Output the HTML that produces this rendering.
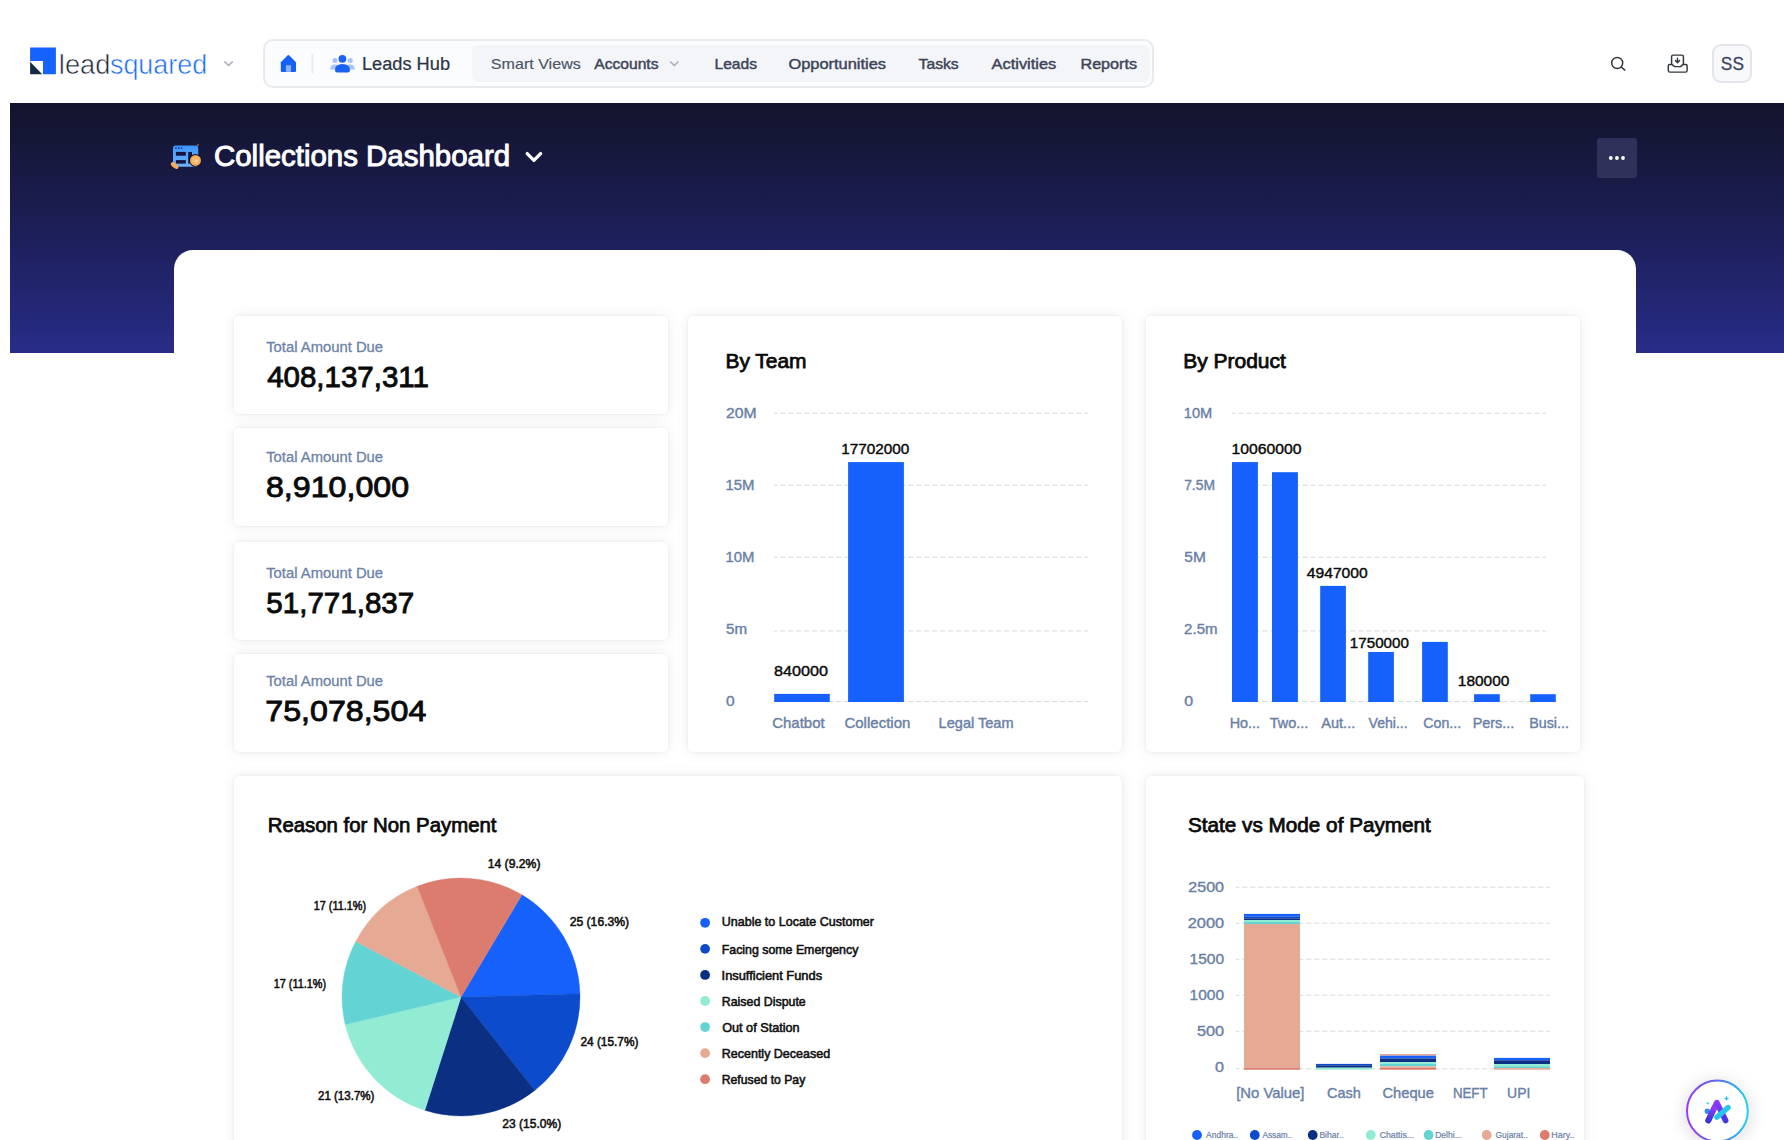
<!DOCTYPE html>
<html lang="en"><head><meta charset="utf-8"><title>Collections Dashboard</title>
<style>
html,body{margin:0;padding:0;background:#fff;}
body{width:1784px;height:1140px;position:relative;overflow:hidden;font-family:"Liberation Sans", sans-serif;}
body>div{position:absolute;box-sizing:border-box;}
svg.ov{position:absolute;left:0;top:0;font-family:"Liberation Sans", sans-serif;}
</style></head><body>
<div style="left:263px;top:38.6px;width:891px;height:49.5px;background:#fbfcfd;border:2px solid #e8eaee;border-radius:10px;"></div>
<div style="left:472px;top:44.5px;width:678px;height:37.5px;background:#f3f5f8;border-radius:7px;"></div>
<div style="left:1712.4px;top:43.8px;width:39.6px;height:39.7px;background:#f8f9fb;border:2px solid #e3e5ea;border-radius:9px;"></div>
<div style="left:10px;top:103px;width:1774px;height:249.6px;background:linear-gradient(180deg,#13142b 0%,#1b1d52 45%,#282c87 100%);"></div>
<div style="left:174px;top:250px;width:1462px;height:910px;background:#fff;border-radius:19px 19px 0 0;"></div>
<div style="left:1597px;top:138px;width:40px;height:40px;background:#30315b;border-radius:3px;"></div>
<div style="left:234px;top:316px;width:434px;height:98px;background:#fff;border-radius:5px;box-shadow:0 0 14px rgba(0,0,0,0.08),0 0 3px rgba(0,0,0,0.04),0 0 0 1px rgba(0,0,0,0.012);"></div>
<div style="left:234px;top:428px;width:434px;height:98px;background:#fff;border-radius:5px;box-shadow:0 0 14px rgba(0,0,0,0.08),0 0 3px rgba(0,0,0,0.04),0 0 0 1px rgba(0,0,0,0.012);"></div>
<div style="left:234px;top:541.5px;width:434px;height:98px;background:#fff;border-radius:5px;box-shadow:0 0 14px rgba(0,0,0,0.08),0 0 3px rgba(0,0,0,0.04),0 0 0 1px rgba(0,0,0,0.012);"></div>
<div style="left:234px;top:654px;width:434px;height:98px;background:#fff;border-radius:5px;box-shadow:0 0 14px rgba(0,0,0,0.08),0 0 3px rgba(0,0,0,0.04),0 0 0 1px rgba(0,0,0,0.012);"></div>
<div style="left:688px;top:316px;width:434px;height:435.5px;background:#fff;border-radius:5px;box-shadow:0 0 14px rgba(0,0,0,0.08),0 0 3px rgba(0,0,0,0.04),0 0 0 1px rgba(0,0,0,0.012);"></div>
<div style="left:1146px;top:316px;width:434px;height:435.5px;background:#fff;border-radius:5px;box-shadow:0 0 14px rgba(0,0,0,0.08),0 0 3px rgba(0,0,0,0.04),0 0 0 1px rgba(0,0,0,0.012);"></div>
<div style="left:234px;top:776px;width:888px;height:384px;background:#fff;border-radius:5px;box-shadow:0 0 14px rgba(0,0,0,0.08),0 0 3px rgba(0,0,0,0.04),0 0 0 1px rgba(0,0,0,0.012);"></div>
<div style="left:1146px;top:776px;width:438px;height:384px;background:#fff;border-radius:5px;box-shadow:0 0 14px rgba(0,0,0,0.08),0 0 3px rgba(0,0,0,0.04),0 0 0 1px rgba(0,0,0,0.012);"></div>
<svg class="ov" width="1784" height="1140" viewBox="0 0 1784 1140">
<path d="M30.1 47.4H55.9V74.2H43V60.9H30.1Z" fill="#1562fc"/>
<path d="M30.1 61.7L42.2 74.2H30.1Z" fill="#142b45"/>
<text x="58.86" y="74.10" font-size="27" font-weight="normal" fill="#1f2a37" textLength="51.49" lengthAdjust="spacingAndGlyphs" style="paint-order:fill stroke" stroke="#fff" stroke-width="0.55">lead</text>
<text x="109.95" y="74.10" font-size="27" font-weight="normal" fill="#1a6cf0" textLength="97.28" lengthAdjust="spacingAndGlyphs" style="paint-order:fill stroke" stroke="#fff" stroke-width="0.55">squared</text>
<path d="M224.9 61.9L228.6 65.5L232.3 61.9" fill="none" stroke="#adb4c1" stroke-width="1.7" stroke-linecap="round" stroke-linejoin="round"/>
<path d="M280.8 62.2L287.5 55.5Q288.4 54.7 289.3 55.5L296 62.2V70.9Q296 71.9 295 71.9H281.8Q280.8 71.9 280.8 70.9Z" fill="#1660fa"/>
<rect x="285.9" y="65.2" width="5.1" height="6.7" fill="#8fb0fa"/>
<rect x="311.40" y="53.90" width="2.00" height="19.50" fill="#e9ebee"/>
<g fill="#a9c3f9"><circle cx="334.9" cy="60.4" r="2.5"/><circle cx="350.2" cy="60.4" r="2.5"/><path d="M330.2 69.5Q330.2 64.4 335 64.4Q339.5 64.4 339.5 69.5Z"/><path d="M345.5 69.5Q345.5 64.4 350 64.4Q354.8 64.4 354.8 69.5Z"/></g>
<g fill="#1a62f4"><circle cx="342.4" cy="58.8" r="3.9"/><path d="M335 70.4Q335 64.1 342.4 64.1Q349.9 64.1 349.9 70.4Q349.9 72.4 347.9 72.4H337Q335 72.4 335 70.4Z"/></g>
<text x="361.90" y="69.80" font-size="18" font-weight="normal" fill="#2b3245" textLength="88.16" lengthAdjust="spacingAndGlyphs" stroke="#2b3245" stroke-width="0.2">Leads Hub</text>
<text x="490.86" y="68.90" font-size="15" font-weight="normal" fill="#4d5567" textLength="89.93" lengthAdjust="spacingAndGlyphs" stroke="#4d5567" stroke-width="0.18">Smart Views</text>
<text x="594.29" y="68.90" font-size="15" font-weight="normal" fill="#3d4558" textLength="64.24" lengthAdjust="spacingAndGlyphs" stroke="#3d4558" stroke-width="0.45">Accounts</text>
<path d="M670.6 61.9L674.3 65.6L678 61.9" fill="none" stroke="#b2b9c6" stroke-width="1.9" stroke-linecap="round" stroke-linejoin="round"/>
<text x="714.44" y="68.90" font-size="15" font-weight="normal" fill="#3d4558" textLength="42.60" lengthAdjust="spacingAndGlyphs" stroke="#3d4558" stroke-width="0.45">Leads</text>
<text x="788.45" y="68.90" font-size="15" font-weight="normal" fill="#3d4558" textLength="97.62" lengthAdjust="spacingAndGlyphs" stroke="#3d4558" stroke-width="0.45">Opportunities</text>
<text x="918.59" y="68.90" font-size="15" font-weight="normal" fill="#3d4558" textLength="40.13" lengthAdjust="spacingAndGlyphs" stroke="#3d4558" stroke-width="0.45">Tasks</text>
<text x="991.59" y="68.90" font-size="15" font-weight="normal" fill="#3d4558" textLength="64.67" lengthAdjust="spacingAndGlyphs" stroke="#3d4558" stroke-width="0.45">Activities</text>
<text x="1080.50" y="68.90" font-size="15" font-weight="normal" fill="#3d4558" textLength="56.46" lengthAdjust="spacingAndGlyphs" stroke="#3d4558" stroke-width="0.45">Reports</text>
<g fill="none" stroke="#2f333a" stroke-width="1.45" stroke-linecap="round"><circle cx="1617.2" cy="63" r="5.5"/><path d="M1621.6 67.3L1624.8 70.1"/></g>
<g fill="none" stroke="#32363d" stroke-width="1.45" stroke-linecap="round" stroke-linejoin="round"><path d="M1671.6 63.8V56.5Q1671.6 55.1 1673 55.1H1682Q1683.4 55.1 1683.4 56.5V63.8"/><path d="M1669.7 64.4H1671.8L1674.7 66.6H1680.4L1683.2 64.4H1685.7Q1687.1 64.4 1687.1 65.8V70.5Q1687.1 72.1 1685.5 72.1H1669.9Q1668.3 72.1 1668.3 70.5V65.8Q1668.3 64.4 1669.7 64.4Z"/><path d="M1677.5 58.3V62.4M1675.4 60.6L1677.5 62.7L1679.6 60.6"/></g>
<text x="1720.86" y="69.70" font-size="17.5" font-weight="normal" fill="#3a4460" textLength="23.08" lengthAdjust="spacingAndGlyphs" stroke="#3a4460" stroke-width="0.3">SS</text>
<text x="213.98" y="165.90" font-size="28.6" font-weight="normal" fill="#fff" textLength="296.14" lengthAdjust="spacingAndGlyphs" stroke="#fff" stroke-width="0.95">Collections Dashboard</text>
<path d="M527.2 153.6L533.9 160.4L540.6 153.6" fill="none" stroke="#fff" stroke-width="3.3" stroke-linecap="round" stroke-linejoin="round"/>
<defs><linearGradient id="wg" x1="0" y1="0" x2="0" y2="1"><stop offset="0" stop-color="#3a93fb"/><stop offset="0.28" stop-color="#4fa0fc"/><stop offset="1" stop-color="#6ab3fe"/></linearGradient><radialGradient id="cg" cx="0.55" cy="0.55" r="0.6"><stop offset="0" stop-color="#fde3b5"/><stop offset="0.35" stop-color="#f7b463"/><stop offset="1" stop-color="#f49b43"/></radialGradient></defs>
<g><rect x="173" y="145.4" width="25.2" height="21.3" rx="2.4" fill="url(#wg)"/><g fill="#123a9c"><circle cx="175.9" cy="148.1" r="0.95"/><circle cx="178.7" cy="148.1" r="0.95"/><circle cx="181.6" cy="148.1" r="0.95"/></g><g fill="#15153f"><rect x="175.9" y="151.9" width="9.9" height="3.8"/><rect x="175.9" y="160.1" width="9.9" height="3.5"/><rect x="188.2" y="151.9" width="3.8" height="11.7"/></g><circle cx="195.5" cy="160.4" r="6.4" fill="#0f1030"/><circle cx="195.5" cy="160.4" r="5.5" fill="url(#cg)"/><circle cx="195.5" cy="160.4" r="3" fill="none" stroke="#f8c889" stroke-width="0.8"/><ellipse cx="174.6" cy="165.6" rx="4.4" ry="2.3" transform="rotate(40 174.6 165.6)" fill="#f6ab57"/><path d="M196.8 145.2L198.6 143.6L198.4 145.8Z" fill="#d99a6a"/></g>
<g fill="#fff"><circle cx="1610.8" cy="158" r="1.9"/><circle cx="1616.9" cy="158" r="1.9"/><circle cx="1623" cy="158" r="1.9"/></g>
<text x="266.22" y="352.10" font-size="14" font-weight="normal" fill="#6d83a8" textLength="116.87" lengthAdjust="spacingAndGlyphs" stroke="#6d83a8" stroke-width="0.3">Total Amount Due</text>
<text x="267.18" y="387.00" font-size="30" font-weight="normal" fill="#0a0a0a" textLength="161.69" lengthAdjust="spacingAndGlyphs" stroke="#0a0a0a" stroke-width="0.9">408,137,311</text>
<text x="266.22" y="462.10" font-size="14" font-weight="normal" fill="#6d83a8" textLength="116.87" lengthAdjust="spacingAndGlyphs" stroke="#6d83a8" stroke-width="0.3">Total Amount Due</text>
<text x="265.95" y="497.00" font-size="30" font-weight="normal" fill="#0a0a0a" textLength="143.16" lengthAdjust="spacingAndGlyphs" stroke="#0a0a0a" stroke-width="0.9">8,910,000</text>
<text x="266.22" y="578.10" font-size="14" font-weight="normal" fill="#6d83a8" textLength="116.87" lengthAdjust="spacingAndGlyphs" stroke="#6d83a8" stroke-width="0.3">Total Amount Due</text>
<text x="266.37" y="613.00" font-size="30" font-weight="normal" fill="#0a0a0a" textLength="147.87" lengthAdjust="spacingAndGlyphs" stroke="#0a0a0a" stroke-width="0.9">51,771,837</text>
<text x="266.22" y="686.10" font-size="14" font-weight="normal" fill="#6d83a8" textLength="116.87" lengthAdjust="spacingAndGlyphs" stroke="#6d83a8" stroke-width="0.3">Total Amount Due</text>
<text x="265.30" y="721.00" font-size="30" font-weight="normal" fill="#0a0a0a" textLength="160.99" lengthAdjust="spacingAndGlyphs" stroke="#0a0a0a" stroke-width="0.9">75,078,504</text>
<text x="725.41" y="368.10" font-size="20" font-weight="normal" fill="#0a0a0a" textLength="81.15" lengthAdjust="spacingAndGlyphs" stroke="#0a0a0a" stroke-width="0.75">By Team</text>
<line x1="774" x2="1088" y1="413.2" y2="413.2" stroke="#d9d9d9" stroke-width="1.05" stroke-dasharray="5 3" stroke-dashoffset="1.7"/>
<line x1="774" x2="1088" y1="485.2" y2="485.2" stroke="#d9d9d9" stroke-width="1.05" stroke-dasharray="5 3" stroke-dashoffset="1.7"/>
<line x1="774" x2="1088" y1="557.2" y2="557.2" stroke="#d9d9d9" stroke-width="1.05" stroke-dasharray="5 3" stroke-dashoffset="1.7"/>
<line x1="774" x2="1088" y1="631" y2="631" stroke="#d9d9d9" stroke-width="1.05" stroke-dasharray="5 3" stroke-dashoffset="1.7"/>
<line x1="774" x2="1088" y1="701.5" y2="701.5" stroke="#d9d9d9" stroke-width="1.05" stroke-dasharray="5 3" stroke-dashoffset="1.7"/>
<text x="725.90" y="417.80" font-size="13.9" font-weight="normal" fill="#6a80a6" textLength="30.71" lengthAdjust="spacingAndGlyphs" stroke="#6a80a6" stroke-width="0.38">20M</text>
<text x="725.56" y="489.85" font-size="13.9" font-weight="normal" fill="#6a80a6" textLength="28.98" lengthAdjust="spacingAndGlyphs" stroke="#6a80a6" stroke-width="0.38">15M</text>
<text x="725.56" y="561.90" font-size="13.9" font-weight="normal" fill="#6a80a6" textLength="28.87" lengthAdjust="spacingAndGlyphs" stroke="#6a80a6" stroke-width="0.38">10M</text>
<text x="726.08" y="633.80" font-size="13.9" font-weight="normal" fill="#6a80a6" textLength="21.02" lengthAdjust="spacingAndGlyphs" stroke="#6a80a6" stroke-width="0.38">5m</text>
<text x="726.08" y="705.60" font-size="13.9" font-weight="normal" fill="#6a80a6" textLength="8.63" lengthAdjust="spacingAndGlyphs" stroke="#6a80a6" stroke-width="0.38">0</text>
<rect x="774.20" y="693.90" width="55.60" height="8.10" fill="#1660fb"/>
<rect x="848.10" y="462.10" width="55.80" height="239.90" fill="#1660fb"/>
<text x="774.10" y="676.30" font-size="14.3" font-weight="normal" fill="#0a0a0a" textLength="53.93" lengthAdjust="spacingAndGlyphs" stroke="#0a0a0a" stroke-width="0.4">840000</text>
<text x="841.23" y="453.90" font-size="14.3" font-weight="normal" fill="#0a0a0a" textLength="68.17" lengthAdjust="spacingAndGlyphs" stroke="#0a0a0a" stroke-width="0.4">17702000</text>
<text x="772.23" y="727.60" font-size="13.9" font-weight="normal" fill="#6a80a6" textLength="52.49" lengthAdjust="spacingAndGlyphs" stroke="#6a80a6" stroke-width="0.38">Chatbot</text>
<text x="844.43" y="727.60" font-size="13.9" font-weight="normal" fill="#6a80a6" textLength="65.96" lengthAdjust="spacingAndGlyphs" stroke="#6a80a6" stroke-width="0.38">Collection</text>
<text x="938.63" y="727.60" font-size="13.9" font-weight="normal" fill="#6a80a6" textLength="74.92" lengthAdjust="spacingAndGlyphs" stroke="#6a80a6" stroke-width="0.38">Legal Team</text>
<text x="1183.26" y="368.10" font-size="20" font-weight="normal" fill="#0a0a0a" textLength="102.52" lengthAdjust="spacingAndGlyphs" stroke="#0a0a0a" stroke-width="0.75">By Product</text>
<line x1="1232" x2="1546" y1="413.2" y2="413.2" stroke="#d9d9d9" stroke-width="1.05" stroke-dasharray="5 3" stroke-dashoffset="1.7"/>
<line x1="1232" x2="1546" y1="485.2" y2="485.2" stroke="#d9d9d9" stroke-width="1.05" stroke-dasharray="5 3" stroke-dashoffset="1.7"/>
<line x1="1232" x2="1546" y1="557.2" y2="557.2" stroke="#d9d9d9" stroke-width="1.05" stroke-dasharray="5 3" stroke-dashoffset="1.7"/>
<line x1="1232" x2="1546" y1="631" y2="631" stroke="#d9d9d9" stroke-width="1.05" stroke-dasharray="5 3" stroke-dashoffset="1.7"/>
<line x1="1232" x2="1546" y1="701.5" y2="701.5" stroke="#d9d9d9" stroke-width="1.05" stroke-dasharray="5 3" stroke-dashoffset="1.7"/>
<text x="1183.78" y="417.80" font-size="13.9" font-weight="normal" fill="#6a80a6" textLength="28.43" lengthAdjust="spacingAndGlyphs" stroke="#6a80a6" stroke-width="0.38">10M</text>
<text x="1184.18" y="489.85" font-size="13.9" font-weight="normal" fill="#6a80a6" textLength="30.76" lengthAdjust="spacingAndGlyphs" stroke="#6a80a6" stroke-width="0.38">7.5M</text>
<text x="1184.27" y="561.90" font-size="13.9" font-weight="normal" fill="#6a80a6" textLength="21.51" lengthAdjust="spacingAndGlyphs" stroke="#6a80a6" stroke-width="0.38">5M</text>
<text x="1184.14" y="633.80" font-size="13.9" font-weight="normal" fill="#6a80a6" textLength="33.36" lengthAdjust="spacingAndGlyphs" stroke="#6a80a6" stroke-width="0.38">2.5m</text>
<text x="1184.27" y="705.60" font-size="13.9" font-weight="normal" fill="#6a80a6" textLength="8.87" lengthAdjust="spacingAndGlyphs" stroke="#6a80a6" stroke-width="0.38">0</text>
<rect x="1232.00" y="462.10" width="25.90" height="239.90" fill="#1660fb"/>
<rect x="1272.00" y="472.20" width="25.90" height="229.80" fill="#1660fb"/>
<rect x="1320.20" y="585.90" width="25.70" height="116.10" fill="#1660fb"/>
<rect x="1368.20" y="652.00" width="25.70" height="50.00" fill="#1660fb"/>
<rect x="1422.10" y="641.90" width="25.70" height="60.10" fill="#1660fb"/>
<rect x="1474.10" y="694.20" width="25.70" height="7.80" fill="#1660fb"/>
<rect x="1530.20" y="694.20" width="25.60" height="7.80" fill="#1660fb"/>
<text x="1231.60" y="453.90" font-size="14.3" font-weight="normal" fill="#0a0a0a" textLength="69.91" lengthAdjust="spacingAndGlyphs" stroke="#0a0a0a" stroke-width="0.4">10060000</text>
<text x="1306.84" y="577.70" font-size="14.3" font-weight="normal" fill="#0a0a0a" textLength="60.87" lengthAdjust="spacingAndGlyphs" stroke="#0a0a0a" stroke-width="0.4">4947000</text>
<text x="1349.84" y="647.80" font-size="14.3" font-weight="normal" fill="#0a0a0a" textLength="59.05" lengthAdjust="spacingAndGlyphs" stroke="#0a0a0a" stroke-width="0.4">1750000</text>
<text x="1457.82" y="686.00" font-size="14.3" font-weight="normal" fill="#0a0a0a" textLength="51.58" lengthAdjust="spacingAndGlyphs" stroke="#0a0a0a" stroke-width="0.4">180000</text>
<text x="1229.71" y="727.90" font-size="13.9" font-weight="normal" fill="#6a80a6" textLength="30.42" lengthAdjust="spacingAndGlyphs" stroke="#6a80a6" stroke-width="0.38">Ho...</text>
<text x="1269.87" y="727.90" font-size="13.9" font-weight="normal" fill="#6a80a6" textLength="38.43" lengthAdjust="spacingAndGlyphs" stroke="#6a80a6" stroke-width="0.38">Two...</text>
<text x="1321.26" y="727.90" font-size="13.9" font-weight="normal" fill="#6a80a6" textLength="33.98" lengthAdjust="spacingAndGlyphs" stroke="#6a80a6" stroke-width="0.38">Aut...</text>
<text x="1368.53" y="727.90" font-size="13.9" font-weight="normal" fill="#6a80a6" textLength="39.14" lengthAdjust="spacingAndGlyphs" stroke="#6a80a6" stroke-width="0.38">Vehi...</text>
<text x="1423.27" y="727.90" font-size="13.9" font-weight="normal" fill="#6a80a6" textLength="37.84" lengthAdjust="spacingAndGlyphs" stroke="#6a80a6" stroke-width="0.38">Con...</text>
<text x="1472.71" y="727.90" font-size="13.9" font-weight="normal" fill="#6a80a6" textLength="41.62" lengthAdjust="spacingAndGlyphs" stroke="#6a80a6" stroke-width="0.38">Pers...</text>
<text x="1529.22" y="727.90" font-size="13.9" font-weight="normal" fill="#6a80a6" textLength="39.70" lengthAdjust="spacingAndGlyphs" stroke="#6a80a6" stroke-width="0.38">Busi...</text>
<text x="267.70" y="831.70" font-size="20" font-weight="normal" fill="#0a0a0a" textLength="228.77" lengthAdjust="spacingAndGlyphs" stroke="#0a0a0a" stroke-width="0.75">Reason for Non Payment</text>
<path d="M461 997L521.93 894.78A119 119 0 0 1 579.95 993.68Z" fill="#1660fb" stroke="#1660fb" stroke-width="0.4"/>
<path d="M461 997L579.95 993.68A119 119 0 0 1 534.75 1090.39Z" fill="#0c4ccc" stroke="#0c4ccc" stroke-width="0.4"/>
<path d="M461 997L534.75 1090.39A119 119 0 0 1 424.82 1110.37Z" fill="#0b2f83" stroke="#0b2f83" stroke-width="0.4"/>
<path d="M461 997L424.82 1110.37A119 119 0 0 1 345.24 1024.58Z" fill="#92ecd3" stroke="#92ecd3" stroke-width="0.4"/>
<path d="M461 997L345.24 1024.58A119 119 0 0 1 355.73 941.50Z" fill="#63d3d3" stroke="#63d3d3" stroke-width="0.4"/>
<path d="M461 997L355.73 941.50A119 119 0 0 1 417.19 886.36Z" fill="#e6aa94" stroke="#e6aa94" stroke-width="0.4"/>
<path d="M461 997L417.19 886.36A119 119 0 0 1 521.93 894.78Z" fill="#dc7c6e" stroke="#dc7c6e" stroke-width="0.4"/>
<text x="487.65" y="867.70" font-size="12.3" font-weight="normal" fill="#111" textLength="52.83" lengthAdjust="spacingAndGlyphs" stroke="#111" stroke-width="0.55">14 (9.2%)</text>
<text x="569.66" y="925.70" font-size="12.3" font-weight="normal" fill="#111" textLength="59.52" lengthAdjust="spacingAndGlyphs" stroke="#111" stroke-width="0.55">25 (16.3%)</text>
<text x="580.38" y="1045.70" font-size="12.3" font-weight="normal" fill="#111" textLength="58.08" lengthAdjust="spacingAndGlyphs" stroke="#111" stroke-width="0.55">24 (15.7%)</text>
<text x="502.37" y="1128.20" font-size="12.3" font-weight="normal" fill="#111" textLength="58.80" lengthAdjust="spacingAndGlyphs" stroke="#111" stroke-width="0.55">23 (15.0%)</text>
<text x="317.99" y="1100.20" font-size="12.3" font-weight="normal" fill="#111" textLength="56.45" lengthAdjust="spacingAndGlyphs" stroke="#111" stroke-width="0.55">21 (13.7%)</text>
<text x="273.76" y="988.20" font-size="12.3" font-weight="normal" fill="#111" textLength="52.33" lengthAdjust="spacingAndGlyphs" stroke="#111" stroke-width="0.55">17 (11.1%)</text>
<text x="313.76" y="910.20" font-size="12.3" font-weight="normal" fill="#111" textLength="52.33" lengthAdjust="spacingAndGlyphs" stroke="#111" stroke-width="0.55">17 (11.1%)</text>
<circle cx="705.1" cy="922.80" r="4.9" fill="#1660fb"/>
<text x="721.81" y="926.10" font-size="12.2" font-weight="normal" fill="#111" textLength="152.12" lengthAdjust="spacingAndGlyphs" stroke="#111" stroke-width="0.55">Unable to Locate Customer</text>
<circle cx="705.1" cy="948.87" r="4.9" fill="#0c4ccc"/>
<text x="721.76" y="954.07" font-size="12.2" font-weight="normal" fill="#111" textLength="136.59" lengthAdjust="spacingAndGlyphs" stroke="#111" stroke-width="0.55">Facing some Emergency</text>
<circle cx="705.1" cy="974.94" r="4.9" fill="#0b2f83"/>
<text x="721.59" y="980.14" font-size="12.2" font-weight="normal" fill="#111" textLength="100.50" lengthAdjust="spacingAndGlyphs" stroke="#111" stroke-width="0.55">Insufficient Funds</text>
<circle cx="705.1" cy="1001.01" r="4.9" fill="#92ecd3"/>
<text x="721.76" y="1006.21" font-size="12.2" font-weight="normal" fill="#111" textLength="84.02" lengthAdjust="spacingAndGlyphs" stroke="#111" stroke-width="0.55">Raised Dispute</text>
<circle cx="705.1" cy="1027.08" r="4.9" fill="#63d3d3"/>
<text x="722.17" y="1032.28" font-size="12.2" font-weight="normal" fill="#111" textLength="77.47" lengthAdjust="spacingAndGlyphs" stroke="#111" stroke-width="0.55">Out of Station</text>
<circle cx="705.1" cy="1053.15" r="4.9" fill="#e6aa94"/>
<text x="721.75" y="1058.35" font-size="12.2" font-weight="normal" fill="#111" textLength="108.38" lengthAdjust="spacingAndGlyphs" stroke="#111" stroke-width="0.55">Recently Deceased</text>
<circle cx="705.1" cy="1079.22" r="4.9" fill="#dc7c6e"/>
<text x="721.77" y="1084.42" font-size="12.2" font-weight="normal" fill="#111" textLength="83.48" lengthAdjust="spacingAndGlyphs" stroke="#111" stroke-width="0.55">Refused to Pay</text>
<text x="1188.03" y="831.70" font-size="20" font-weight="normal" fill="#0a0a0a" textLength="242.84" lengthAdjust="spacingAndGlyphs" stroke="#0a0a0a" stroke-width="0.75">State vs Mode of Payment</text>
<line x1="1236" x2="1550" y1="887.3" y2="887.3" stroke="#d9d9d9" stroke-width="1.05" stroke-dasharray="5 3" stroke-dashoffset="1.7"/>
<line x1="1236" x2="1550" y1="923.3" y2="923.3" stroke="#d9d9d9" stroke-width="1.05" stroke-dasharray="5 3" stroke-dashoffset="1.7"/>
<line x1="1236" x2="1550" y1="959.3" y2="959.3" stroke="#d9d9d9" stroke-width="1.05" stroke-dasharray="5 3" stroke-dashoffset="1.7"/>
<line x1="1236" x2="1550" y1="995.3" y2="995.3" stroke="#d9d9d9" stroke-width="1.05" stroke-dasharray="5 3" stroke-dashoffset="1.7"/>
<line x1="1236" x2="1550" y1="1031.3" y2="1031.3" stroke="#d9d9d9" stroke-width="1.05" stroke-dasharray="5 3" stroke-dashoffset="1.7"/>
<line x1="1236" x2="1550" y1="1068.8" y2="1068.8" stroke="#d9d9d9" stroke-width="1.05" stroke-dasharray="5 3" stroke-dashoffset="1.7"/>
<text x="1188.28" y="892.10" font-size="14.1" font-weight="normal" fill="#6a80a6" textLength="35.76" lengthAdjust="spacingAndGlyphs" stroke="#6a80a6" stroke-width="0.38">2500</text>
<text x="1187.77" y="927.90" font-size="14.1" font-weight="normal" fill="#6a80a6" textLength="36.28" lengthAdjust="spacingAndGlyphs" stroke="#6a80a6" stroke-width="0.38">2000</text>
<text x="1189.61" y="963.90" font-size="14.1" font-weight="normal" fill="#6a80a6" textLength="34.40" lengthAdjust="spacingAndGlyphs" stroke="#6a80a6" stroke-width="0.38">1500</text>
<text x="1189.61" y="999.90" font-size="14.1" font-weight="normal" fill="#6a80a6" textLength="34.40" lengthAdjust="spacingAndGlyphs" stroke="#6a80a6" stroke-width="0.38">1000</text>
<text x="1196.94" y="1035.90" font-size="14.1" font-weight="normal" fill="#6a80a6" textLength="27.11" lengthAdjust="spacingAndGlyphs" stroke="#6a80a6" stroke-width="0.38">500</text>
<text x="1215.06" y="1071.70" font-size="14.1" font-weight="normal" fill="#6a80a6" textLength="8.98" lengthAdjust="spacingAndGlyphs" stroke="#6a80a6" stroke-width="0.38">0</text>
<rect x="1244.00" y="913.90" width="56.00" height="2.70" fill="#1660fb"/>
<rect x="1244.00" y="916.60" width="56.00" height="1.70" fill="#0c4ccc"/>
<rect x="1244.00" y="918.30" width="56.00" height="1.70" fill="#0b2f83"/>
<rect x="1244.00" y="920.00" width="56.00" height="2.00" fill="#92ecd3"/>
<rect x="1244.00" y="922.00" width="56.00" height="2.00" fill="#63d3d3"/>
<rect x="1244.00" y="924.00" width="56.00" height="143.80" fill="#e6aa94"/>
<rect x="1244.00" y="1067.80" width="56.00" height="1.90" fill="#dc7c6e"/>
<rect x="1316.00" y="1063.90" width="56.00" height="1.40" fill="#0c4ccc"/>
<rect x="1316.00" y="1065.30" width="56.00" height="2.40" fill="#0b2f83"/>
<rect x="1316.00" y="1067.70" width="56.00" height="2.00" fill="#92ecd3"/>
<rect x="1380.00" y="1054.00" width="56.00" height="1.70" fill="#e6aa94"/>
<rect x="1380.00" y="1055.70" width="56.00" height="2.80" fill="#1660fb"/>
<rect x="1380.00" y="1058.50" width="56.00" height="3.70" fill="#0b2f83"/>
<rect x="1380.00" y="1062.20" width="56.00" height="1.80" fill="#92ecd3"/>
<rect x="1380.00" y="1064.00" width="56.00" height="2.30" fill="#63d3d3"/>
<rect x="1380.00" y="1066.30" width="56.00" height="1.40" fill="#e6aa94"/>
<rect x="1380.00" y="1067.70" width="56.00" height="2.00" fill="#dc7c6e"/>
<rect x="1494.00" y="1057.90" width="56.00" height="2.40" fill="#1660fb"/>
<rect x="1494.00" y="1060.30" width="56.00" height="3.70" fill="#0b2f83"/>
<rect x="1494.00" y="1064.00" width="56.00" height="2.30" fill="#92ecd3"/>
<rect x="1494.00" y="1066.30" width="56.00" height="1.70" fill="#63d3d3"/>
<rect x="1494.00" y="1068.00" width="56.00" height="1.70" fill="#e6aa94"/>
<text x="1236.15" y="1098.00" font-size="14.1" font-weight="normal" fill="#6a80a6" textLength="68.31" lengthAdjust="spacingAndGlyphs" stroke="#6a80a6" stroke-width="0.38">[No Value]</text>
<text x="1326.95" y="1098.00" font-size="14.1" font-weight="normal" fill="#6a80a6" textLength="33.90" lengthAdjust="spacingAndGlyphs" stroke="#6a80a6" stroke-width="0.38">Cash</text>
<text x="1382.44" y="1098.00" font-size="14.1" font-weight="normal" fill="#6a80a6" textLength="51.52" lengthAdjust="spacingAndGlyphs" stroke="#6a80a6" stroke-width="0.38">Cheque</text>
<text x="1452.90" y="1098.00" font-size="14.1" font-weight="normal" fill="#6a80a6" textLength="34.72" lengthAdjust="spacingAndGlyphs" stroke="#6a80a6" stroke-width="0.38">NEFT</text>
<text x="1507.11" y="1098.00" font-size="14.1" font-weight="normal" fill="#6a80a6" textLength="23.29" lengthAdjust="spacingAndGlyphs" stroke="#6a80a6" stroke-width="0.38">UPI</text>
<circle cx="1197" cy="1135" r="4.9" fill="#1660fb"/>
<text x="1206.08" y="1138.00" font-size="8.6" font-weight="normal" fill="#6a80a6" textLength="32.09" lengthAdjust="spacingAndGlyphs" stroke="#6a80a6" stroke-width="0.2">Andhra..</text>
<circle cx="1254.8" cy="1135" r="4.9" fill="#0c4ccc"/>
<text x="1262.38" y="1138.00" font-size="8.6" font-weight="normal" fill="#6a80a6" textLength="29.97" lengthAdjust="spacingAndGlyphs" stroke="#6a80a6" stroke-width="0.2">Assam..</text>
<circle cx="1312.7" cy="1135" r="4.9" fill="#0b2f83"/>
<text x="1319.41" y="1138.00" font-size="8.6" font-weight="normal" fill="#6a80a6" textLength="24.25" lengthAdjust="spacingAndGlyphs" stroke="#6a80a6" stroke-width="0.2">Bihar..</text>
<circle cx="1370.8" cy="1135" r="4.9" fill="#92ecd3"/>
<text x="1379.66" y="1138.00" font-size="8.6" font-weight="normal" fill="#6a80a6" textLength="34.44" lengthAdjust="spacingAndGlyphs" stroke="#6a80a6" stroke-width="0.2">Chattis...</text>
<circle cx="1428.6" cy="1135" r="4.9" fill="#63d3d3"/>
<text x="1435.20" y="1138.00" font-size="8.6" font-weight="normal" fill="#6a80a6" textLength="26.58" lengthAdjust="spacingAndGlyphs" stroke="#6a80a6" stroke-width="0.2">Delhi...</text>
<circle cx="1486.7" cy="1135" r="4.9" fill="#e6aa94"/>
<text x="1495.58" y="1138.00" font-size="8.6" font-weight="normal" fill="#6a80a6" textLength="32.19" lengthAdjust="spacingAndGlyphs" stroke="#6a80a6" stroke-width="0.2">Gujarat..</text>
<circle cx="1544.8" cy="1135" r="4.9" fill="#dc7c6e"/>
<text x="1551.39" y="1138.00" font-size="8.6" font-weight="normal" fill="#6a80a6" textLength="22.99" lengthAdjust="spacingAndGlyphs" stroke="#6a80a6" stroke-width="0.2">Hary..</text>
<defs><linearGradient id="fg" x1="0" y1="0" x2="1" y2="0"><stop offset="0" stop-color="#9b3df5"/><stop offset="0.5" stop-color="#5a6be8"/><stop offset="1" stop-color="#22d3ee"/></linearGradient><linearGradient id="ag" x1="0.5" y1="0" x2="0.3" y2="1"><stop offset="0" stop-color="#8a3cf6"/><stop offset="1" stop-color="#3b34d8"/></linearGradient><filter id="fs" x="-50%" y="-50%" width="200%" height="200%"><feGaussianBlur stdDeviation="8.5"/></filter></defs>
<circle cx="1717.4" cy="1113.5" r="33" fill="#000" opacity="0.13" filter="url(#fs)"/>
<circle cx="1717.4" cy="1111" r="30.4" fill="#fff" stroke="url(#fg)" stroke-width="2"/>
<circle cx="1707.3" cy="1111.2" r="2.7" fill="#2f8fe8"/>
<g fill="none" stroke-linecap="round" stroke-linejoin="round"><path d="M1708.3 1120.5L1716.8 1102.6L1725.6 1120.5" stroke="url(#ag)" stroke-width="5.7"/><path d="M1716.9 1117.2L1728.1 1107.5" stroke="#22c7ea" stroke-width="5.3"/><path d="M1708.3 1120.5L1714.2 1108.1" stroke="url(#ag)" stroke-width="5.7"/></g>
<path d="M1726.5 1095.7L1727.3 1097.7L1729.3 1098.5L1727.3 1099.3L1726.5 1101.3L1725.7 1099.3L1723.7 1098.5L1725.7 1097.7Z" fill="#22c7ea"/>
<circle cx="1707.7" cy="1103.3" r="1.1" fill="#22c7ea"/>
</svg>
</body></html>
